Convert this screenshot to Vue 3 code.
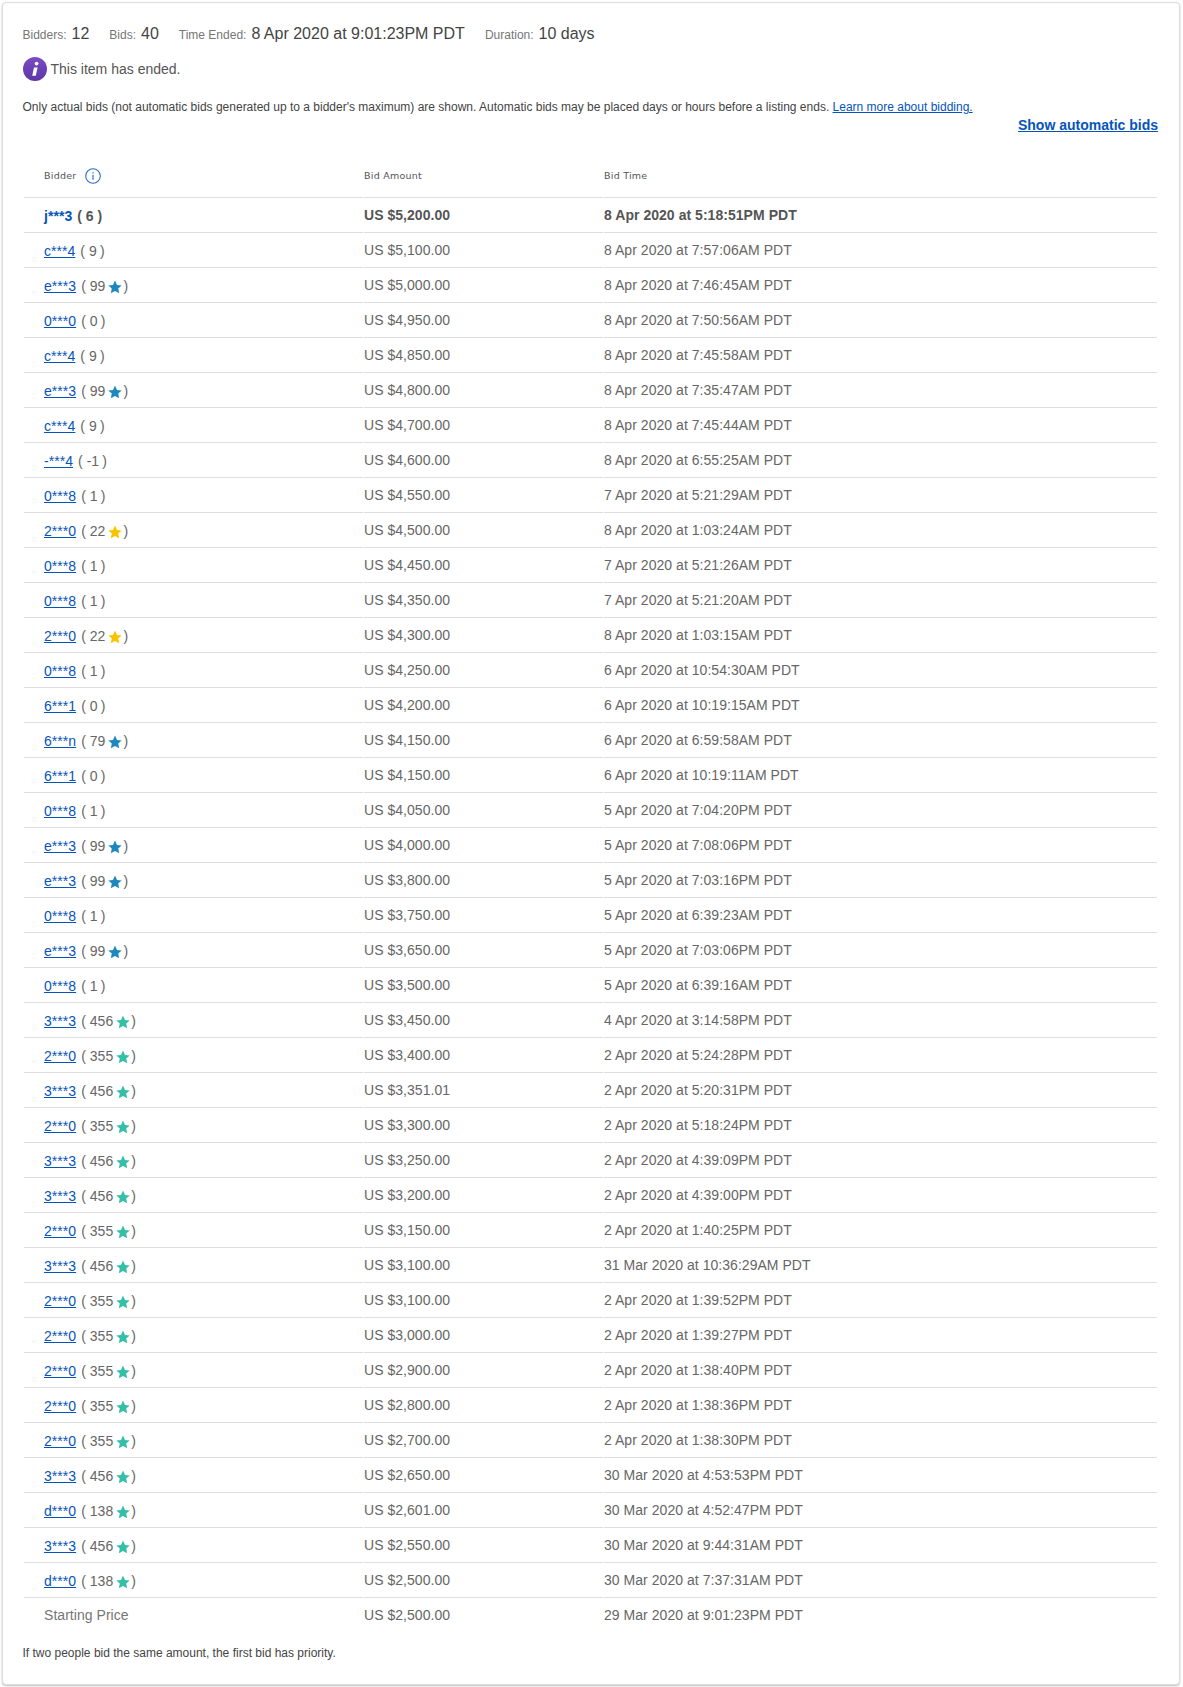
<script setup>
const teal = '#36bfa8', blue = '#1d88bd', gold = '#f8c400'
const raw = `c***4|9||$5,100.00|8 Apr 2020 at 7:57:06AM PDT
e***3|99|b|$5,000.00|8 Apr 2020 at 7:46:45AM PDT
0***0|0||$4,950.00|8 Apr 2020 at 7:50:56AM PDT
c***4|9||$4,850.00|8 Apr 2020 at 7:45:58AM PDT
e***3|99|b|$4,800.00|8 Apr 2020 at 7:35:47AM PDT
c***4|9||$4,700.00|8 Apr 2020 at 7:45:44AM PDT
-***4|-1||$4,600.00|8 Apr 2020 at 6:55:25AM PDT
0***8|1||$4,550.00|7 Apr 2020 at 5:21:29AM PDT
2***0|22|y|$4,500.00|8 Apr 2020 at 1:03:24AM PDT
0***8|1||$4,450.00|7 Apr 2020 at 5:21:26AM PDT
0***8|1||$4,350.00|7 Apr 2020 at 5:21:20AM PDT
2***0|22|y|$4,300.00|8 Apr 2020 at 1:03:15AM PDT
0***8|1||$4,250.00|6 Apr 2020 at 10:54:30AM PDT
6***1|0||$4,200.00|6 Apr 2020 at 10:19:15AM PDT
6***n|79|b|$4,150.00|6 Apr 2020 at 6:59:58AM PDT
6***1|0||$4,150.00|6 Apr 2020 at 10:19:11AM PDT
0***8|1||$4,050.00|5 Apr 2020 at 7:04:20PM PDT
e***3|99|b|$4,000.00|5 Apr 2020 at 7:08:06PM PDT
e***3|99|b|$3,800.00|5 Apr 2020 at 7:03:16PM PDT
0***8|1||$3,750.00|5 Apr 2020 at 6:39:23AM PDT
e***3|99|b|$3,650.00|5 Apr 2020 at 7:03:06PM PDT
0***8|1||$3,500.00|5 Apr 2020 at 6:39:16AM PDT
3***3|456|t|$3,450.00|4 Apr 2020 at 3:14:58PM PDT
2***0|355|t|$3,400.00|2 Apr 2020 at 5:24:28PM PDT
3***3|456|t|$3,351.01|2 Apr 2020 at 5:20:31PM PDT
2***0|355|t|$3,300.00|2 Apr 2020 at 5:18:24PM PDT
3***3|456|t|$3,250.00|2 Apr 2020 at 4:39:09PM PDT
3***3|456|t|$3,200.00|2 Apr 2020 at 4:39:00PM PDT
2***0|355|t|$3,150.00|2 Apr 2020 at 1:40:25PM PDT
3***3|456|t|$3,100.00|31 Mar 2020 at 10:36:29AM PDT
2***0|355|t|$3,100.00|2 Apr 2020 at 1:39:52PM PDT
2***0|355|t|$3,000.00|2 Apr 2020 at 1:39:27PM PDT
2***0|355|t|$2,900.00|2 Apr 2020 at 1:38:40PM PDT
2***0|355|t|$2,800.00|2 Apr 2020 at 1:38:36PM PDT
2***0|355|t|$2,700.00|2 Apr 2020 at 1:38:30PM PDT
3***3|456|t|$2,650.00|30 Mar 2020 at 4:53:53PM PDT
d***0|138|t|$2,601.00|30 Mar 2020 at 4:52:47PM PDT
3***3|456|t|$2,550.00|30 Mar 2020 at 9:44:31AM PDT
d***0|138|t|$2,500.00|30 Mar 2020 at 7:37:31AM PDT`
const colors = { b: blue, y: gold, t: teal }
const rows = raw.split('\n').map((l) => {
  const [name, score, star, amount, time] = l.split('|')
  return { name, score, star: colors[star], amount, time }
})
const starPath = 'M7 0.6 L9 4.9 L13.7 5.4 L10.2 8.6 L11.2 13.3 L7 10.9 L2.8 13.3 L3.8 8.6 L0.3 5.4 L5 4.9 Z'
</script>

<template>
  <div class="page">
    <div class="card">
      <div class="stats">
        <span class="label">Bidders:</span><span class="value">12</span>
        <span class="label">Bids:</span><span class="value">40</span>
        <span class="label">Time Ended:</span><span class="value">8 Apr 2020 at 9:01:23PM PDT</span>
        <span class="label">Duration:</span><span class="value">10 days</span>
      </div>
      <div class="ended">
        <svg class="ended-icon" width="24" height="24" viewBox="0 0 24 24">
          <defs>
            <linearGradient id="purple" x1="0" y1="0" x2="0" y2="1">
              <stop offset="0" stop-color="#7a4cc4" />
              <stop offset="1" stop-color="#5f36a6" />
            </linearGradient>
          </defs>
          <circle cx="12" cy="12" r="12" fill="url(#purple)" />
          <circle cx="13.6" cy="6.6" r="1.9" fill="#fff" />
          <path d="M11 10.4 L14.6 10.4 L12.8 18.8 L9.2 18.8 Z" fill="#fff" />
        </svg>
        <span>This item has ended.</span>
      </div>
      <p class="note">Only actual bids (not automatic bids generated up to a bidder's maximum) are shown. Automatic bids may be placed days or hours before a listing ends. <a href="#" class="learn">Learn more about bidding.</a></p>
      <div class="toggle"><a href="#">Show automatic bids</a></div>
      <table class="bids">
        <thead>
          <tr>
            <th class="c1">
              <span class="th-inner">Bidder
                <svg class="info" width="16" height="16" viewBox="0 0 16 16" fill="none">
                  <circle cx="8" cy="8" r="7.3" stroke="#2b6fc4" stroke-width="1.1" />
                  <rect x="7.4" y="6.8" width="1.2" height="5" fill="#2b6fc4" />
                  <rect x="7.4" y="4.2" width="1.2" height="1.3" fill="#2b6fc4" />
                </svg>
              </span>
            </th>
            <th class="c2">Bid Amount</th>
            <th class="c3">Bid Time</th>
          </tr>
        </thead>
        <tbody>
          <tr class="winner">
            <td class="c1"><a href="#">j***3</a><span class="score">( 6 )</span></td>
            <td>US $5,200.00</td>
            <td>8 Apr 2020 at 5:18:51PM PDT</td>
          </tr>
          <tr v-for="(r, i) in rows" :key="i">
            <td class="c1">
              <a href="#">{{ r.name }}</a><span class="score">( {{ r.score }}<svg v-if="r.star" class="star" width="14" height="14" viewBox="0 0 14 14"><path :d="starPath" :fill="r.star" /></svg><span v-else class="pad">&#160;</span>)</span>
            </td>
            <td>US {{ r.amount }}</td>
            <td>{{ r.time }}</td>
          </tr>
          <tr class="start">
            <td class="c1">Starting Price</td>
            <td>US $2,500.00</td>
            <td>29 Mar 2020 at 9:01:23PM PDT</td>
          </tr>
        </tbody>
      </table>
      <p class="foot">If two people bid the same amount, the first bid has priority.</p>
    </div>
  </div>
</template>

<style>
html, body { margin: 0; background: #fff; }
</style>

<style scoped>
.page {
  width: 1183px;
  height: 1687px;
  padding: 2px 3px 2px 2px;
  box-sizing: border-box;
  font-family: "Liberation Sans", Arial, sans-serif;
  color: #555;
}
.card {
  height: 100%;
  box-sizing: border-box;
  border: 1px solid #ddd;
  border-radius: 4px;
  box-shadow: 0 1px 2px rgba(0, 0, 0, 0.25);
  padding: 19px 21px 0 19.5px;
  background: #fff;
}
.stats {
  display: flex;
  align-items: baseline;
  height: 24px;
  line-height: 24px;
}
.label { font-size: 12px; color: #767676; margin-right: 5px; }
.value { font-size: 16px; color: #444; margin-right: 20px; }
.ended {
  display: flex;
  align-items: center;
  height: 26px;
  margin-top: 10px;
  font-size: 14px;
  color: #555;
}
.ended-icon { margin-right: 4px; }
.note {
  margin: 17px 0 0;
  font-size: 12px;
  line-height: 16px;
  color: #444;
  white-space: nowrap;
}
.learn { color: #0654ba; }
.toggle {
  text-align: right;
  font-size: 14px;
  font-weight: 700;
  line-height: 18px;
  margin-top: 1px;
}
.toggle a { color: #0654ba; }
.bids {
  margin: 20px 0 0 0.5px;
  width: 1135px;
  border-collapse: separate;
  border-spacing: 1px 0;
  table-layout: fixed;
  font-size: 14px;
}
th {
  height: 44px;
  padding: 0;
  box-sizing: border-box;
  text-align: left;
  font-family: "DejaVu Sans", sans-serif;
  font-size: 9.5px;
  font-weight: 400;
  color: #555;
  letter-spacing: 0.25px;
  border-bottom: 1px solid #ddd;
  vertical-align: middle;
}
th.c1 { width: 339px; padding-left: 20px; }
th.c2 { width: 239px; }
.th-inner { display: inline-flex; align-items: center; gap: 9px; }
.info { display: block; }
td {
  height: 35px;
  padding: 0 0 1px;
  box-sizing: border-box;
  border-bottom: 1px solid #ddd;
  color: #666;
  letter-spacing: 0.04px;
  white-space: nowrap;
  vertical-align: middle;
}
tbody tr:last-child td { border-bottom: 0; }
td.c1 { padding: 1px 0 0 20px; }
td a { color: #0654ba; }
.score { color: #666; margin-left: 5px; }
.pad { font-size: 11px; }
.star { width: 14px; height: 14px; margin: 0 1px 0 3px; vertical-align: -3px; }
.winner td { font-weight: 700; color: #555; }
.winner .score { color: #555; }
.winner a { text-decoration: none; }
.start td.c1 { color: #767676; padding: 0 0 1px 20px; }
.foot {
  margin: 12px 0 0;
  font-size: 12px;
  line-height: 16px;
  color: #444;
}
</style>
